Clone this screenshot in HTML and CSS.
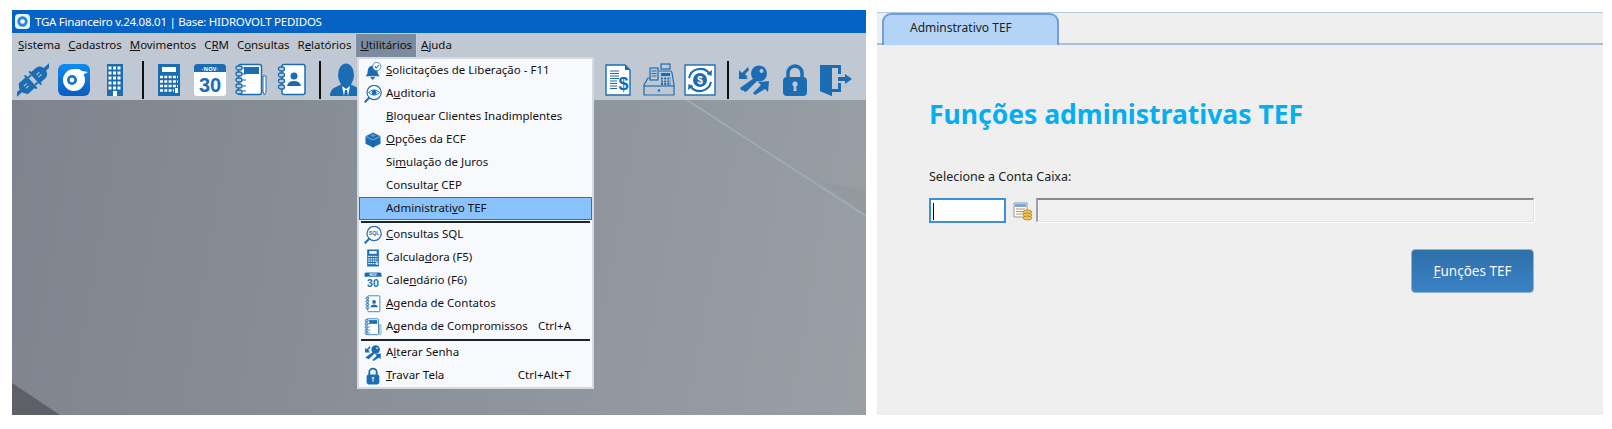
FILE: index.html
```html
<!DOCTYPE html>
<html lang="pt-BR">
<head>
<meta charset="utf-8">
<title>TGA Financeiro</title>
<link rel="stylesheet" href="styles.css">
</head>
<body>
<svg class="defs" width="0" height="0" aria-hidden="true">
  <defs>
    <linearGradient id="logoGrad" x1="0" y1="0" x2="0" y2="1"><stop offset="0" stop-color="#0d8cf0"/><stop offset="1" stop-color="#0a5cc0"/></linearGradient>
    <symbol id="i-plug" viewBox="0 0 32 34">
      <g transform="rotate(-42 16 17)">
        <path d="M-7 17H1M31 17H39" stroke="#1a6db3" stroke-width="3.500"/>
        <path d="M0 14l3-4h9v-2h2v18h-2v-2H3l-3-4z" fill="#1a6db3"/>
        <path d="M18 8h2v2h7q4 1 5 5v4q-1 4-5 5h-7v2h-2z" fill="#1a6db3"/>
        <path d="M14 12h4M14 22h4" stroke="#1a6db3" stroke-width="2"/>
        <path d="M5 15.500h4M5 18.500h4M22 15.500h4M22 18.500h4" stroke="#c0c8d3" stroke-width="1"/>
      </g>
    </symbol>
    <symbol id="i-logo" viewBox="0 0 32 34">
      <rect x="0" y="1" width="32" height="32" rx="6" fill="url(#logoGrad)"/>
      <path d="M16 6a11 11 0 1 0 11 11c0-2-.5-4-1.500-5.500L30 9l-6-1-3-2z" fill="#fff"/>
      <circle cx="14" cy="17" r="5" fill="#1b78c8"/>
      <circle cx="14" cy="17" r="2.300" fill="#fff"/>
    </symbol>
    <symbol id="i-building" viewBox="0 0 32 34">
      <rect x="8" y="1" width="16" height="32" fill="#1a6db3"/>
      <path d="M9.500 5H23M9.500 10H23M9.500 15H23M9.500 20H23" stroke="#fff" stroke-width="3" stroke-dasharray="3 1.500"/>
      <path d="M9.500 25H23" stroke="#fff" stroke-width="3" stroke-dasharray="3 1.500"/>
      <rect x="14" y="28" width="4" height="5" fill="#fff"/>
    </symbol>
    <symbol id="i-calc" viewBox="0 0 32 34">
      <rect x="5" y="1" width="22" height="32" fill="#1a6db3"/>
      <rect x="9" y="4" width="14" height="5" fill="#fff"/>
      <path d="M7 14H25M7 18.500H25M7 23H25M7 27.500H21" stroke="#fff" stroke-width="2.500" stroke-dasharray="3 1.300"/>
      <rect x="22" y="25" width="3" height="5" fill="#fff"/>
    </symbol>
    <symbol id="i-cal" viewBox="0 0 32 34">
      <rect x="0" y="1" width="32" height="32" rx="3" fill="#fff"/>
      <path d="M0 9V4a3 3 0 0 1 3-3h26a3 3 0 0 1 3 3v5z" fill="#1a6db3"/>
      <text class="svg-nov" x="16" y="7.500" text-anchor="middle">·NOV·</text>
      <text class="svg-thirty" x="16" y="29" text-anchor="middle">30</text>
    </symbol>
    <symbol id="i-notebook" viewBox="0 0 32 34">
      <rect x="4.500" y="1.500" width="23" height="30" rx="2" fill="#fff" stroke="#1a6db3" stroke-width="1.500" transform="translate(-1 0)"/>
      <rect x="9" y="4" width="15" height="7" fill="#1a6db3"/>
      <path d="M7 5h4M7 11h4M7 17h4M7 23h4M7 28h4" stroke="#1a6db3" stroke-width="1"/>
      <g fill="#c0c8d3" stroke="#1a6db3" stroke-width="1.300">
        <rect x="1" y="3" width="6" height="4" rx="2"/><rect x="1" y="9" width="6" height="4" rx="2"/><rect x="1" y="15" width="6" height="4" rx="2"/><rect x="1" y="21" width="6" height="4" rx="2"/><rect x="1" y="27" width="6" height="4" rx="2"/>
      </g>
      <path d="M28 13h3v16l-1.500 3-1.500-3z" fill="#fff" stroke="#1a6db3" stroke-width="1"/>
    </symbol>
    <symbol id="i-contacts" viewBox="0 0 32 34">
      <rect x="6" y="1.500" width="23" height="30" rx="2" fill="#fff" stroke="#1a6db3" stroke-width="1.500"/>
      <g fill="#c0c8d3" stroke="#1a6db3" stroke-width="1.300">
        <rect x="2.500" y="4" width="6" height="4" rx="2"/><rect x="2.500" y="10" width="6" height="4" rx="2"/><rect x="2.500" y="16" width="6" height="4" rx="2"/><rect x="2.500" y="22" width="6" height="4" rx="2"/>
      </g>
      <circle cx="18" cy="13" r="3.500" fill="#1a6db3"/>
      <path d="M11 23q1-5 7-5t7 5z" fill="#1a6db3"/>
    </symbol>
    <symbol id="i-person" viewBox="0 0 32 34">
      <ellipse cx="16" cy="12" rx="8" ry="11.500" fill="#1a6db3"/>
      <path d="M0 33q0-7 6-9l6-3h8l6 3q6 2 6 9z" fill="#1a6db3"/>
      <path d="M12 23l4 3 4-3-2 10h-4z" fill="#fff"/>
      <path d="M15 27h2l1 6h-4z" fill="#1a6db3"/>
    </symbol>
    <symbol id="i-receipt" viewBox="0 0 32 34">
      <path d="M4 2h19l5 5v25H4z" fill="#fff" stroke="#1a6db3" stroke-width="1.400"/>
      <path d="M23 2v5h5z" fill="#1a6db3"/>
      <path d="M8 8h9M8 10.500h9M8 13h9M8 15.500h9M8 18h7M8 20.500h7M8 23h7M8 25.500h7" stroke="#1a6db3" stroke-width="1.100"/>
      <text class="svg-dollar" x="21.500" y="27" text-anchor="middle">$</text>
    </symbol>
    <symbol id="i-register" viewBox="0 0 32 34">
      <g fill="none" stroke="#1a6db3" stroke-width="1.200">
        <rect x="18" y="1" width="9" height="5"/>
        <rect x="7" y="5" width="8" height="12"/>
        <path d="M16 8h11q2 0 2 2l2 12v10H1V22l4-7h2"/>
        <path d="M1 23h30"/>
      </g>
      <path d="M8.500 8h5M8.500 10.500h5M8.500 13h5" stroke="#1a6db3" stroke-width="1"/>
      <rect x="18" y="10" width="9" height="3" fill="#1a6db3"/>
      <path d="M18 15.500h10M18 18.500h10M18 21h10" stroke="#1a6db3" stroke-width="1.800" stroke-dasharray="2 1.200"/>
      <circle cx="16" cy="27.500" r="1.300" fill="#1a6db3"/>
    </symbol>
    <symbol id="i-cash" viewBox="0 0 32 34">
      <rect x="1" y="2" width="30" height="30" fill="#fff" stroke="#1a6db3" stroke-width="1.400"/>
      <circle cx="16" cy="17" r="7" fill="#1a6db3"/>
      <text class="svg-cash" x="16" y="20.500" text-anchor="middle">$</text>
      <path d="M5 15a11.500 11.500 0 0 1 20-5M27 19a11.500 11.500 0 0 1-20 5" fill="none" stroke="#1a6db3" stroke-width="2"/>
      <path d="M28 7l-.5 6-5-2zM4 27l.5-6 5 2z" fill="#1a6db3"/>
    </symbol>
    <symbol id="i-keys" viewBox="0 0 32 34">
      <circle cx="21" cy="10.500" r="8" fill="#1a6db3"/>
      <circle cx="23.500" cy="8" r="2" fill="#c0c8d3"/>
      <path d="M16 15l3 3-10 10-2 1-2-2-1 1-2-3z" fill="#1a6db3"/>
      <path d="M1 13L10 4l1 3-4 4 3 3z" fill="#1a6db3"/>
      <path d="M1 7v9h9z" fill="#1a6db3"/>
      <path d="M17 32l-2-2 8-8-3-3 11-1-1 11-3-3z" fill="#1a6db3"/>
    </symbol>
    <symbol id="i-lock" viewBox="0 0 32 34">
      <path d="M9 15V10a7 7 0 0 1 14 0v5" fill="none" stroke="#1a6db3" stroke-width="3.500"/>
      <rect x="4" y="14" width="24" height="19" rx="4" fill="#1a6db3"/>
      <circle cx="16" cy="21" r="2.600" fill="#c0c8d3"/>
      <path d="M15 22h2l.6 6h-3.200z" fill="#c0c8d3"/>
    </symbol>
    <symbol id="i-door" viewBox="0 0 32 34">
      <path d="M0 2h21v9h-3V5H12v21h6v-6h3v9h-9v4L0 28z" fill="#1a6db3"/>
      <path d="M0 2l12 3v28L0 28z" fill="#1a6db3"/>
      <path d="M18 14h7v-3l7 5-7 5v-3h-7z" fill="#1a6db3"/>
    </symbol>
    <symbol id="i-bell" viewBox="0 0 24 24">
      <path d="M2 19q3-2 3-7 0-6 6-7 6 1 7 8 0 4 3 6z" fill="#1a6db3"/>
      <path d="M8 20h7l-3.500 4z" fill="#1a6db3"/>
      <circle cx="17" cy="6" r="5.500" fill="#fff" stroke="#1a6db3" stroke-width="1"/>
      <path d="M14.500 6l2 2 3.500-4" fill="none" stroke="#1a6db3" stroke-width="1.500"/>
    </symbol>
    <symbol id="i-eye" viewBox="0 0 24 24">
      <circle cx="13.500" cy="10" r="9.500" fill="#fff" stroke="#1a6db3" stroke-width="1.600"/>
      <path d="M6 10q7.500-7 15 0-7.500 7-15 0z" fill="#fff" stroke="#1a6db3" stroke-width="1.300"/>
      <circle cx="13.500" cy="10" r="3.300" fill="#1a6db3"/>
      <path d="M7 17L1 23" stroke="#1a6db3" stroke-width="2.500"/>
    </symbol>
    <symbol id="i-cube" viewBox="0 0 24 24">
      <path d="M2 7l10-5 10 5v10l-10 5-10-5z" fill="#1a6db3"/>
      <path d="M2 7l10 5 10-5" fill="none" stroke="#a9cbe8" stroke-width="1"/>
      <path d="M8 5.500l4-2 4 2.500-4 2z" fill="#5c97cc"/>
      <path d="M12 12v10" stroke="#0e4f86" stroke-width="1"/>
    </symbol>
    <symbol id="i-sql" viewBox="0 0 24 24">
      <circle cx="13.500" cy="10" r="9.500" fill="#fff" stroke="#1a6db3" stroke-width="1.600"/>
      <text class="svg-sql" x="13.500" y="12.500" text-anchor="middle">SQL</text>
      <path d="M7 17L1 23" stroke="#1a6db3" stroke-width="2.500"/>
    </symbol>
  </defs>
</svg>

<div class="page">
  <section class="erp">
    <header class="titlebar">
      <svg class="title-icon" viewBox="0 0 16 16"><rect width="16" height="16" rx="4" fill="#e9f3fd"/><circle cx="8" cy="8" r="5.500" fill="#2a86d8"/><circle cx="8" cy="8" r="2.500" fill="#fff"/></svg>
      <span class="title-text">TGA Financeiro v.24.08.01 | Base: HIDROVOLT PEDIDOS</span>
    </header>
    <nav class="menubar">
      <span class="menubar-item"><u>S</u>istema</span>
      <span class="menubar-item"><u>C</u>adastros</span>
      <span class="menubar-item"><u>M</u>ovimentos</span>
      <span class="menubar-item">C<u>R</u>M</span>
      <span class="menubar-item">C<u>o</u>nsultas</span>
      <span class="menubar-item">R<u>e</u>latórios</span>
      <span class="menubar-item is-open"><u>U</u>tilitários</span>
      <span class="menubar-item"><u>A</u>juda</span>
    </nav>
    <div class="toolbar">
      <svg class="tool"><use href="#i-plug"/></svg>
      <svg class="tool"><use href="#i-logo"/></svg>
      <svg class="tool"><use href="#i-building"/></svg>
      <span class="tool-sep"></span>
      <svg class="tool"><use href="#i-calc"/></svg>
      <svg class="tool"><use href="#i-cal"/></svg>
      <svg class="tool"><use href="#i-notebook"/></svg>
      <svg class="tool"><use href="#i-contacts"/></svg>
      <span class="tool-sep"></span>
      <svg class="tool"><use href="#i-person"/></svg>
      <span class="tool-hidden"></span>
      <svg class="tool"><use href="#i-receipt"/></svg>
      <svg class="tool"><use href="#i-register"/></svg>
      <svg class="tool"><use href="#i-cash"/></svg>
      <span class="tool-sep"></span>
      <svg class="tool"><use href="#i-keys"/></svg>
      <svg class="tool"><use href="#i-lock"/></svg>
      <svg class="tool"><use href="#i-door"/></svg>
    </div>
    <div class="workspace">
      <svg class="wallpaper" viewBox="0 0 854 315" preserveAspectRatio="none">
        <path d="M0 283L48 315H0z" fill="#5f5f67"/>
        <path d="M675 0L854 116" stroke="#a4adb3" stroke-width="1.500" fill="none"/>
        <path d="M811 83L854 90V115z" fill="#8d9199" opacity=".35"/>
      </svg>
    </div>

    <div class="dropdown">
      <div class="row"><span class="row-icon"><svg class="mi"><use href="#i-bell"/></svg></span><span class="row-label"><u>S</u>olicitações de Liberação - F11</span></div>
      <div class="row"><span class="row-icon"><svg class="mi"><use href="#i-eye"/></svg></span><span class="row-label">A<u>u</u>ditoria</span></div>
      <div class="row"><span class="row-icon"></span><span class="row-label"><u>B</u>loquear Clientes Inadimplentes</span></div>
      <div class="row"><span class="row-icon"><svg class="mi"><use href="#i-cube"/></svg></span><span class="row-label"><u>O</u>pções da ECF</span></div>
      <div class="row"><span class="row-icon"></span><span class="row-label">Si<u>m</u>ulação de Juros</span></div>
      <div class="row"><span class="row-icon"></span><span class="row-label">Consulta<u>r</u> CEP</span></div>
      <div class="row is-selected"><span class="row-icon"></span><span class="row-label">Administrati<u>v</u>o TEF</span></div>
      <div class="menu-sep"></div>
      <div class="row"><span class="row-icon"><svg class="mi"><use href="#i-sql"/></svg></span><span class="row-label"><u>C</u>onsultas SQL</span></div>
      <div class="row"><span class="row-icon"><svg class="mi"><use href="#i-calc"/></svg></span><span class="row-label">Calcula<u>d</u>ora (F5)</span></div>
      <div class="row"><span class="row-icon"><svg class="mi"><use href="#i-cal"/></svg></span><span class="row-label">Cale<u>n</u>dário (F6)</span></div>
      <div class="row"><span class="row-icon"><svg class="mi"><use href="#i-contacts"/></svg></span><span class="row-label"><u>A</u>genda de Contatos</span></div>
      <div class="row"><span class="row-icon"><svg class="mi"><use href="#i-notebook"/></svg></span><span class="row-label">A<u>g</u>enda de Compromissos</span><span class="row-key">Ctrl+A</span></div>
      <div class="menu-sep"></div>
      <div class="row"><span class="row-icon"><svg class="mi"><use href="#i-keys"/></svg></span><span class="row-label">A<u>l</u>terar Senha</span></div>
      <div class="row"><span class="row-icon"><svg class="mi"><use href="#i-lock"/></svg></span><span class="row-label"><u>T</u>ravar Tela</span><span class="row-key">Ctrl+Alt+T</span></div>
    </div>
  </section>

  <section class="tef">
    <div class="tabstrip">
      <div class="tab">Adminstrativo TEF</div>
    </div>
    <div class="tef-body">
      <h1 class="tef-title">Funções administrativas TEF</h1>
      <label class="tef-label">Selecione a Conta Caixa:</label>
      <div class="tef-fields">
        <div class="code-input"><span class="caret"></span></div>
        <svg class="lookup" viewBox="0 0 20 20">
          <path d="M1 2h13v14H1z" fill="#fdfdfd" stroke="#8b94a6"/>
          <path d="M2 3h11v3H2z" fill="#7fa6dc"/>
          <path d="M3 8h9M3 10.500h9M3 13h9" stroke="#d68b3a"/>
          <ellipse cx="14.500" cy="11" rx="4.500" ry="2" fill="#e8c35a" stroke="#a77a1d" stroke-width=".7"/>
          <ellipse cx="14.500" cy="14" rx="4.500" ry="2" fill="#e8c35a" stroke="#a77a1d" stroke-width=".7"/>
          <ellipse cx="14.500" cy="17" rx="4.500" ry="2" fill="#e8c35a" stroke="#a77a1d" stroke-width=".7"/>
        </svg>
        <div class="desc-input"></div>
      </div>
      <div class="tef-actions">
        <button class="tef-button" type="button"><u>F</u>unções TEF</button>
      </div>
    </div>
  </section>
</div>
</body>
</html>
```

FILE: styles.css
```css
* { box-sizing: border-box; }
html, body { margin: 0; padding: 0; background: #fff; }
body { width: 1612px; height: 429px; overflow: hidden; font-family: "Noto Sans", "Open Sans", sans-serif; font-size: 12px; color: #111; }
.defs { position: absolute; }
.page { display: flex; align-items: flex-start; padding: 10px 9px 0 12px; gap: 11px; }

/* left application window */
.erp { position: relative; width: 854px; height: 405px; display: flex; flex-direction: column; background: #c0c8d3; }
.titlebar { height: 23px; background: #0663c6; color: #fff; display: flex; align-items: center; padding-left: 3px; gap: 5px; flex: none; }
.title-icon { width: 15px; height: 15px; }
.title-text { font-size: 11.500px; letter-spacing: -.25px; padding-bottom: 1px; }
.menubar { height: 24px; display: flex; padding-left: 2px; flex: none; }
.menubar-item { padding: 2px 4px 0; height: 24px; line-height: 20px; font-size: 11.500px; letter-spacing: -.05px; }
.menubar-item.is-open { background: #7d8ba0; border: 1px solid #c9d1da; border-bottom: 0; padding: 1px 4px 0; }
.toolbar { height: 43px; display: flex; gap: 9px; padding: 6px 0 0 5px; flex: none; }
.tool { width: 32px; height: 34px; flex: none; }
.tool-sep { width: 2px; height: 38px; margin-left: 2px; margin-top: -2px; background: #111; flex: none; }
.tool-hidden { width: 222px; flex: none; }
.workspace { position: relative; flex: 1; background: linear-gradient(100deg, #7f838d 0%, #868c94 30%, #90979e 70%, #98a0a6 100%); }
.wallpaper { position: absolute; inset: 0; width: 100%; height: 100%; }

.svg-nov { font: bold 5.500px "Noto Sans", sans-serif; fill: #fff; letter-spacing: .3px; }
.svg-thirty { font: bold 20px "Liberation Sans", sans-serif; fill: #1a6db3; }
.svg-dollar { font: bold 18px "Liberation Sans", sans-serif; fill: #1a6db3; }
.svg-cash { font: bold 10px "Liberation Sans", sans-serif; fill: #fff; }
.svg-sql { font: bold 7px "Liberation Sans", sans-serif; fill: #1a6db3; }

/* drop-down menu */
.dropdown { position: absolute; left: 345px; top: 47px; width: 237px; height: 332px; background: #f8f9fc; border: 2px solid #d4dae2; }
.row { height: 23px; display: flex; align-items: center; font-size: 11.500px; padding: 0 20px 0 0; border: 1px solid transparent; }
.row.is-selected { background: #8ac2fd; border-color: #1a76d2; }
.row-icon { width: 26px; display: flex; justify-content: center; flex: none; }
.row-label, .row-key { padding-bottom: 3px; }
.mi { width: 18px; height: 18px; }
.row-key { margin-left: auto; }
.menu-sep { height: 3px; padding: 1px 0 0; margin: 0 2px; }
.menu-sep::before { content: ""; display: block; height: 2px; background: #1d2530; }

/* right panel */
.tef { width: 726px; height: 403px; margin-top: 2px; background: #efefef; display: flex; flex-direction: column; border-top: 1px solid #b6c8dd; }
.tabstrip { height: 32px; border-bottom: 2px solid #a9c0dc; padding-left: 5px; background: #efefef; flex: none; }
.tab { width: 177px; height: 32px; background: #b3d4f7; border: 2px solid #6f9fd3; border-bottom: 0; border-radius: 9px 9px 0 0; padding: 5px 0 0 26px; font-size: 12px; line-height: 16px; color: #222; }
.tef-body { display: flex; flex-direction: column; padding: 0 69px 0 52px; }
.tef-title { margin: 52px 0 0; font-size: 26.500px; line-height: 34px; font-weight: 700; color: #06aef0; }
.tef-label { margin-top: 38px; font-size: 12.500px; line-height: 16px; color: #222; }
.tef-fields { display: flex; align-items: flex-start; margin-top: 13px; }
.code-input { width: 77px; height: 25px; background: #fff; border: 2px solid #3c8fd8; padding: 3px 0 0 2px; }
.caret { display: block; width: 1px; height: 17px; background: #000; }
.lookup { width: 20px; height: 20px; margin: 3px 3px 0 7px; flex: none; }
.desc-input { flex: 1; height: 24px; background: #f0f0f0; border-top: 2px solid #8a8a8a; border-left: 2px solid #a0a0a0; border-right: 1px solid #e2e2e2; border-bottom: 1px solid #e2e2e2; box-shadow: 1px 1px 0 #fff; }
.tef-actions { display: flex; justify-content: flex-end; margin-top: 26px; }
.tef-button { width: 123px; height: 44px; border: 1px solid #8fb3d6; border-radius: 4px; background: linear-gradient(180deg, #2f6fa8, #3a82c6); color: #f4f8fc; font: 13.500px "Noto Sans", sans-serif; }
```
